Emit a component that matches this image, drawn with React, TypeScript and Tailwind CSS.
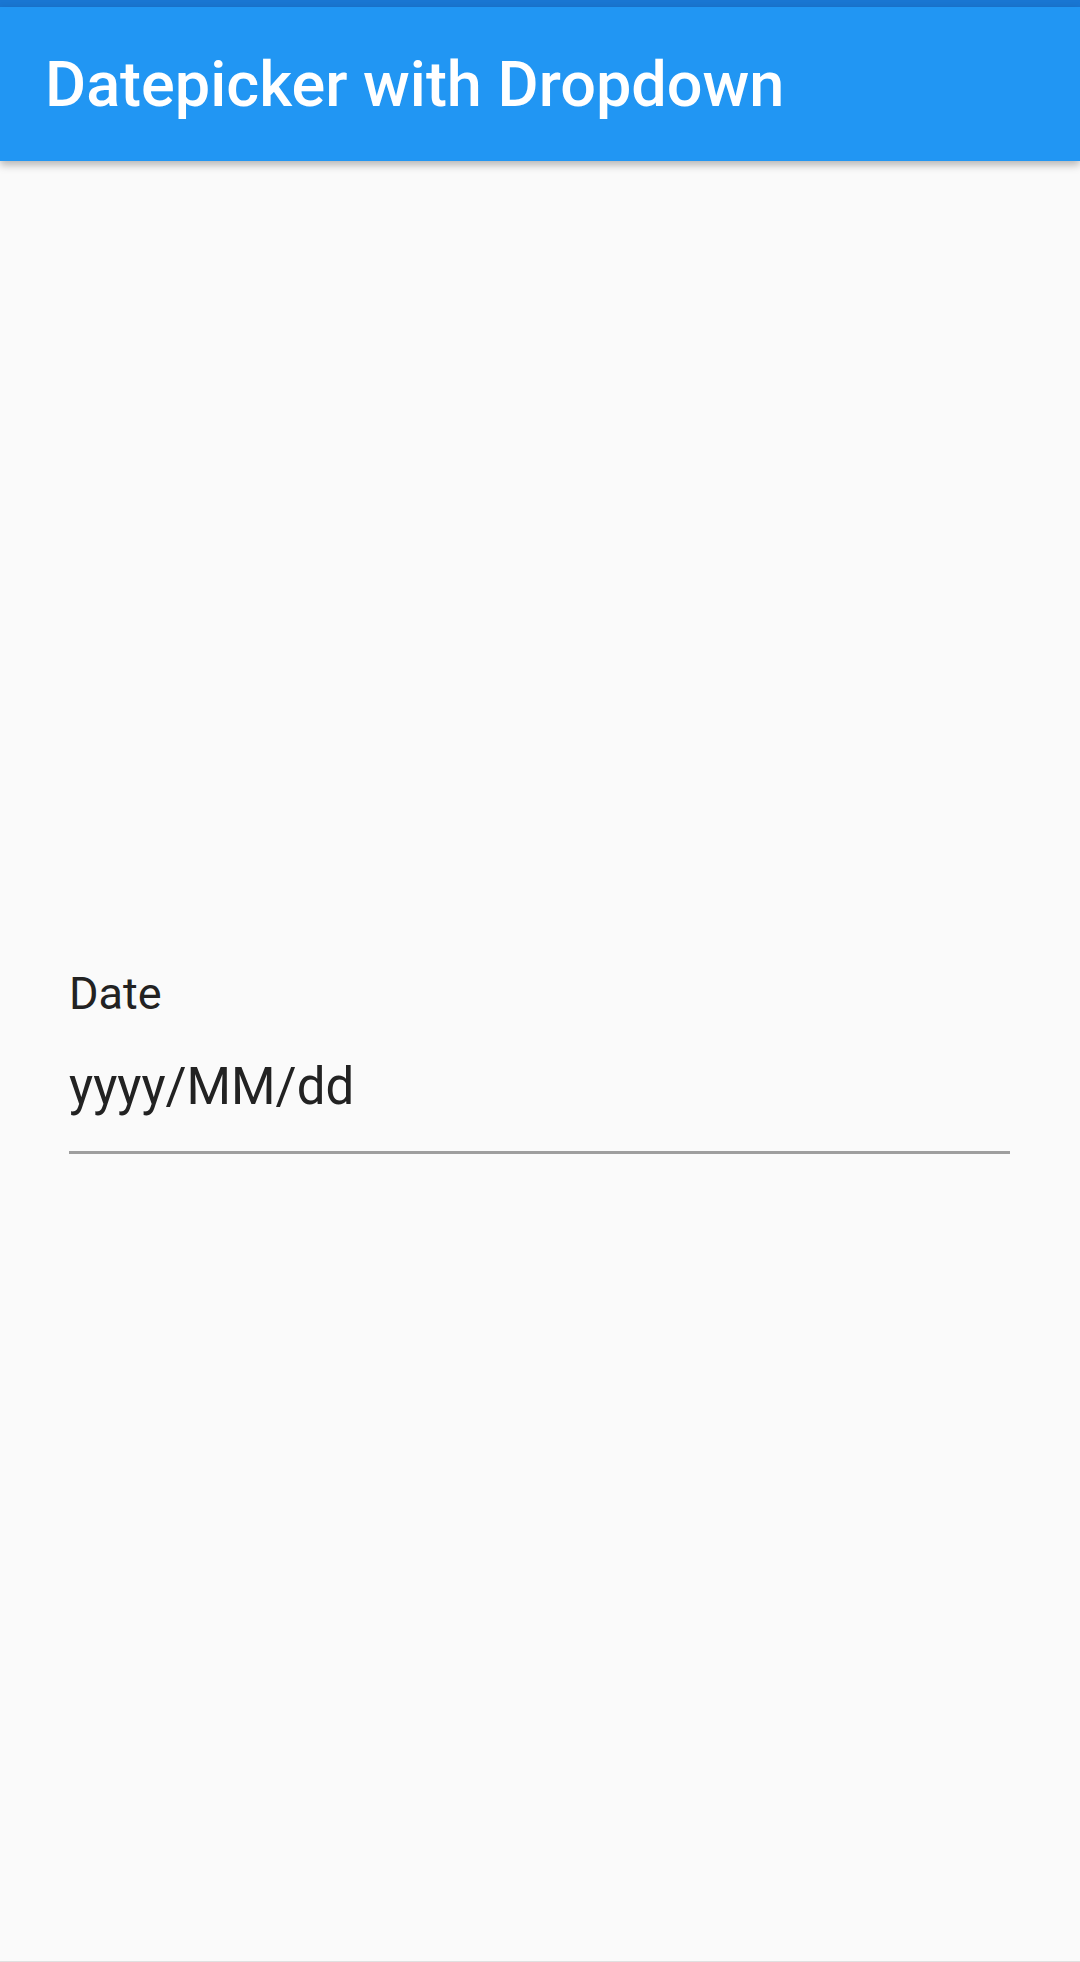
import React from "react";

export default function App() {
  return (
    <div
      className="w-[1080px] h-[1962px] bg-[#fafafa] flex flex-col overflow-hidden"
      style={{ fontFamily: "Roboto, 'Noto Sans', sans-serif" }}
    >
      <div className="h-[7px] bg-[#1976d2] shrink-0" />
      <div className="relative z-10 h-[154px] shrink-0 bg-[#2196f3] flex items-center pl-[45px] shadow-[0_4px_8px_rgba(0,0,0,0.28)]">
        <h1 className="text-white text-[63px] leading-none font-medium">
          Datepicker with Dropdown
        </h1>
      </div>
      <div className="flex-1 flex flex-col px-[69px] pt-[810px] border-b border-[#e0e0e0]">
        <label className="text-[45px] leading-none text-[#222222]">Date</label>
        <div className="mt-[45px] text-[51px] leading-none text-[#222222]">yyyy/MM/dd</div>
        <div className="mt-[39px] h-[3px] w-[941px] bg-[#9e9e9e]" />
      </div>
    </div>
  );
}
